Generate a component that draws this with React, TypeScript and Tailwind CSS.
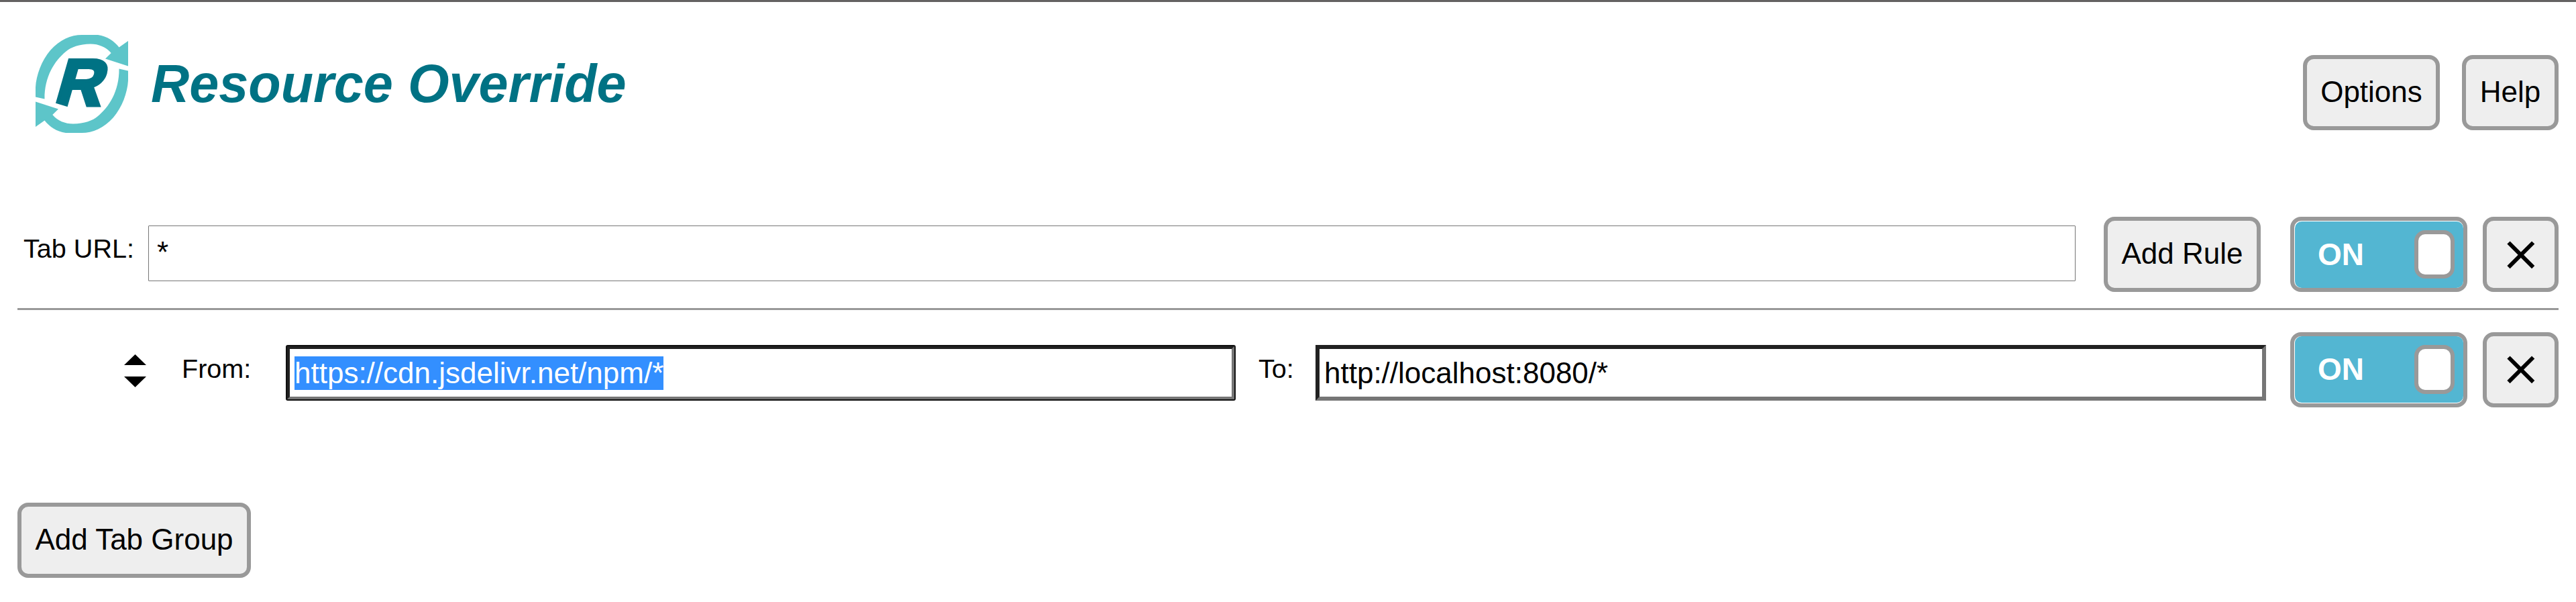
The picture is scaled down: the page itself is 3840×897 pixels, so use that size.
import React from "react";

function Button({ children, className = "" }: { children: React.ReactNode; className?: string }) {
  return (
    <button
      className={`flex h-[112px] shrink-0 justify-center whitespace-nowrap rounded-[16px] border-[6px] border-[#999999] bg-[#eeeeee] pt-[24px] text-[44px] leading-[50px] text-black ${className}`}
    >
      {children}
    </button>
  );
}

function Toggle({ low = false }: { low?: boolean }) {
  return (
    <div
      className={`flex h-[112px] w-[264px] shrink-0 rounded-[16px] border-[6px] border-[#999999] bg-white pl-px ${low ? "pb-px" : "pt-px"}`}
    >
      <div className="flex grow items-start justify-between rounded-[10px] bg-[#53b6d2] pl-[34px] pr-[13px]">
        <span className="mt-[23px] text-[46px] font-bold leading-[52px] text-white">ON</span>
        <span
          className={`mt-[13px] w-[60px] rounded-[16px] border-[6px] border-[#999999] bg-white ${low ? "h-[73px]" : "h-[72px]"}`}
        />
      </div>
    </div>
  );
}

function CloseButton({ low = false }: { low?: boolean }) {
  return (
    <button
      className={`flex h-[112px] w-[113px] shrink-0 justify-center rounded-[16px] border-[6px] border-[#999999] bg-[#eeeeee] ${low ? "pt-[29px]" : "pt-[30px]"}`}
    >
      <svg width="42" height="42" viewBox="0 0 42 42" aria-label="Delete">
        <path d="M2.5 2.500 39.200 39.200M39.200 2.500 2.500 39.200" stroke="#000" strokeWidth="6" fill="none" />
      </svg>
    </button>
  );
}

const ARROW =
  "M53 144.500V130C54 112 62 90 75 75C89 59 106 52 122 52H146C160 54 170 61 177.500 70.500L191 61V98.500L157 87.500L165.700 79C158 70 147 65.500 135 65.500C118 66 106 70 98 77C82 90 66 114 66.500 147.500Z";

function Logo() {
  return (
    <svg className="shrink-0" width="138" height="146" viewBox="53 52 138 146">
      <text
        transform="translate(78 156.500) skewX(-16)"
        x="0"
        y="0"
        className="font-['Liberation_Sans'] text-[98px] font-bold"
        fill="#007284"
        stroke="#007284"
        strokeWidth="5"
      >
        R
      </text>
      <path d="M79 152.500 102 159.500V162H79Z" fill="#fff" />
      <path d={ARROW} fill="#5dc5c9" />
      <path d={ARROW} fill="#5dc5c9" transform="rotate(180 122 125)" />
    </svg>
  );
}

export default function App() {
  return (
    <div className="h-[897px] w-[3840px] overflow-hidden border-t-[3px] border-[#646262] bg-white pl-[26px] pr-[26px] font-['Liberation_Sans',sans-serif] text-black">
      <header className="flex h-[320px] items-start pl-[27px] pt-[49px]">
        <Logo />
        <h1 className="ml-[34px] mt-[27px] text-[79.2px] font-bold italic leading-[92px] text-[#007284]">Resource Override</h1>
        <div className="ml-auto mt-[30px] flex gap-[33px]">
          <Button className="w-[204px]">Options</Button>
          <Button className="w-[144px]">Help</Button>
        </div>
      </header>

      <section className="flex h-[139px] items-start border-b-[3px] border-[#999999]">
        <label className="ml-[9px] mt-[24px] w-[186px] shrink-0 whitespace-nowrap text-[39.6px] leading-[46px]">Tab URL:</label>
        <div className="mt-[13px] h-[83px] w-[2873px] rounded-[1px] border border-[#767676] pl-[12px] pt-[14px] text-[44px] leading-[50px]">*</div>
        <Button className="ml-[42px] w-[234px]">Add Rule</Button>
        <div className="ml-[44px] flex gap-[23px]">
          <Toggle />
          <CloseButton />
        </div>
      </section>

      <section className="flex items-start pt-[33px]">
        <svg className="ml-[159px] mt-[33px] shrink-0" width="33" height="49" viewBox="0 0 33 49">
          <path d="M16.500 0 33 16H0ZM0 33H33L16.500 49Z" />
        </svg>
        <label className="ml-[53px] mt-[31px] w-[155px] shrink-0 text-[39.6px] leading-[46px]">From:</label>
        <div className="mt-[19px] h-[83px] w-[1416px] shrink-0 rounded-[3px] border-2 border-[#101010]">
          <div className="h-full border-4 border-b-[#767676] border-l-[#212121] border-r-[#767676] border-t-[#212121] pl-[7px] pt-[11px] text-[44px] leading-[50px]">
            <span className="inline-block h-[50px] bg-[#338fff] text-white">https://cdn.jsdelivr.net/npm/*</span>
          </div>
        </div>
        <label className="ml-[34px] mt-[31px] w-[85px] shrink-0 text-[39.6px] leading-[46px]">To:</label>
        <div className="mt-[19px] h-[83px] w-[1417px] shrink-0 border-[6px] border-b-[#767676] border-l-[#212121] border-r-[#767676] border-t-[#212121] pl-[7px] pt-[11px] text-[44px] leading-[50px]">
          http://localhost:8080/*
        </div>
        <div className="ml-[36px] flex gap-[23px]">
          <Toggle low />
          <CloseButton low />
        </div>
      </section>

      <div className="mt-[142px] flex">
        <Button className="w-[348px]">Add Tab Group</Button>
      </div>
    </div>
  );
}
